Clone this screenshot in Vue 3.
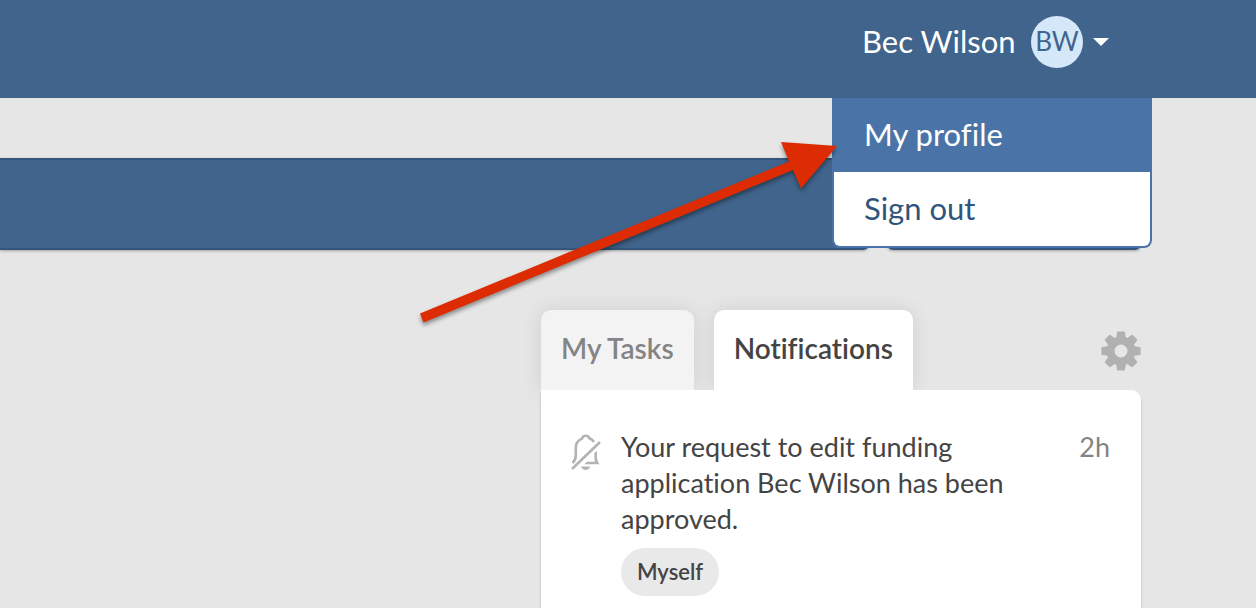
<script setup>
import { ref } from 'vue'

const user = { name: 'Bec Wilson', initials: 'BW' }
const menu = ['My profile', 'Sign out']
const tabs = ['My Tasks', 'Notifications']
const activeTab = ref('Notifications')
const notifications = [
  {
    text: 'Your request to edit funding application Bec Wilson has been approved.',
    age: '2h',
    tag: 'Myself',
  },
]
const teeth = [0, 45, 90, 135, 180, 225, 270, 315]
</script>

<template>
  <div class="page">
    <header class="topbar">
      <div class="account">
        <button class="user" type="button" aria-haspopup="true" aria-expanded="true">
          <span class="name">{{ user.name }}</span>
          <span class="avatar">{{ user.initials }}</span>
          <svg class="caret" width="16" height="8" viewBox="0 0 16 8" aria-hidden="true">
            <path d="M0 0H16L8 8Z" fill="#fff" />
          </svg>
        </button>
        <nav class="menu" aria-label="Account">
          <a v-for="(item, i) in menu" :key="item" href="#" :class="{ current: i === 0 }">{{ item }}</a>
        </nav>
      </div>
    </header>

    <main class="content">
      <div class="bars">
        <div class="bar wide"></div>
        <div class="bar"></div>
      </div>

      <section class="feed">
        <div class="tabs">
          <button
            v-for="tab in tabs"
            :key="tab"
            type="button"
            class="tab"
            :class="{ active: tab === activeTab }"
            @click="activeTab = tab"
          >{{ tab }}</button>
          <button class="settings" type="button" aria-label="Settings">
            <svg width="40" height="40" viewBox="-20 -20 40 40" aria-hidden="true">
              <g fill="#b1b1b1" stroke="#b1b1b1" stroke-width="2" stroke-linejoin="round">
                <path v-for="a in teeth" :key="a" :transform="`rotate(${a})`" d="M-4 -11L-3 -18.6H3L4 -11Z" />
              </g>
              <circle r="10.5" fill="none" stroke="#b1b1b1" stroke-width="8" />
            </svg>
          </button>
        </div>

        <div class="panel">
          <article v-for="n in notifications" :key="n.text" class="note">
            <svg class="bell" width="32" height="40" viewBox="0 0 32 40" aria-hidden="true">
              <g fill="none" stroke="#b3b3b3" stroke-width="2.6">
                <path d="M2.6 30Q5.8 27 5.8 22V15C5.8 10 8.5 7 12 5.6C13 1.7 18.5 1.7 19.6 5.6Q22 6.4 24 8.8" />
                <path d="M2 36L30 9" />
              </g>
              <path d="M24.4 20L27 18V25Q27 28 29.4 31.2H14.5L16.8 28.8H25Q24.4 27 24.4 25Z" fill="#b3b3b3" />
              <path d="M11 33.6H20.2C19 38.2 12.2 38.2 11 33.6Z" fill="#b3b3b3" />
            </svg>
            <div class="body">
              <p>{{ n.text }}</p>
              <span class="tag">{{ n.tag }}</span>
            </div>
            <time class="age">{{ n.age }}</time>
          </article>
        </div>
      </section>
    </main>

    <svg class="arrow" width="440" height="210" viewBox="0 0 440 210" aria-hidden="true">
      <path d="M10 183.500L379 31.500L371 12L427 16L391 58.500L383 40L13.500 192.500Z" fill="#dd2c03" />
    </svg>
  </div>
</template>

<style>
body {
  background: #e6e6e6;
}
</style>

<style scoped>
.page {
  position: relative;
  min-height: 100vh;
  overflow: hidden;
  box-sizing: border-box;
  color: #444;
  font-family: Lato, "Liberation Sans", sans-serif;
  font-variant-ligatures: none;
}
button {
  margin: 0;
  padding: 0;
  border: 0;
  background: none;
  color: inherit;
  font: inherit;
  font-variant-ligatures: none;
  cursor: pointer;
}
.topbar {
  display: flex;
  justify-content: flex-end;
  height: 98px;
  padding-right: 104px;
  background: #41648c;
}
.account {
  position: relative;
  width: 320px;
}
.user {
  display: flex;
  align-items: center;
  height: 84px;
  padding-left: 30px;
  color: #fff;
  font-size: 31px;
}
.name {
  width: 169px;
  padding-bottom: 2px;
  text-align: left;
  white-space: nowrap;
}
.avatar {
  width: 52px;
  height: 52px;
  border-radius: 50%;
  background: #d5e8fa;
  color: #41648c;
  font-size: 26px;
  line-height: 50px;
  text-align: center;
}
.caret {
  margin-left: 10px;
}
.menu {
  position: absolute;
  z-index: 2;
  top: 98px;
  left: 0;
  right: 0;
  overflow: hidden;
  border: 2px solid #4a74a8;
  border-top: 0;
  border-radius: 0 0 8px 8px;
  background: #fff;
}
.menu a {
  display: block;
  padding: 0 30px 2px;
  color: #30557c;
  font-size: 31px;
  line-height: 72px;
  text-decoration: none;
}
.menu a.current {
  background: #4a74a8;
  color: #fff;
}
.content {
  padding: 60px 115px 0 0;
}
.bars {
  display: flex;
  gap: 18px;
}
.bar {
  box-sizing: border-box;
  width: 254px;
  height: 92px;
  border: 2px solid #34567a;
  border-radius: 6px;
  background: #41648c;
  box-shadow: 0 1px 3px rgba(0, 0, 0, 0.3);
}
.bar.wide {
  flex: 1;
  border-left: 0;
  border-radius: 0 6px 6px 0;
}
.feed {
  width: 600px;
  margin: 60px 0 0 auto;
}
.tabs {
  display: flex;
  gap: 20px;
  height: 80px;
}
.tab {
  padding: 0 20px 4px;
  border-radius: 10px 10px 0 0;
  background: #f3f3f3;
  box-shadow: 0 0 20px rgba(0, 0, 0, 0.1);
  color: #848484;
  font-size: 28px;
  font-weight: 600;
  white-space: nowrap;
}
.tab.active {
  background: #fff;
  color: #444;
}
.settings {
  width: 40px;
  height: 40px;
  margin: 21px 0 0 auto;
}
.settings svg,
.bell {
  display: block;
}
.panel {
  position: relative;
  min-height: 218px;
  border-radius: 0 10px 0 0;
  background: #fff;
  box-shadow: 0 3px 3px rgba(0, 0, 0, 0.2);
}
.note {
  display: flex;
  padding: 39px 31px 12px 29px;
  font-size: 27px;
  line-height: 36px;
}
.bell {
  flex: none;
  margin-top: 4px;
}
.body {
  flex: 1;
  margin: 0 64px 0 19px;
}
.body p {
  margin: 0 0 11px;
}
.tag {
  display: inline-block;
  padding: 0 16px;
  border-radius: 24px;
  background: #e9e9e9;
  font-size: 22px;
  font-weight: 600;
  line-height: 48px;
}
.age {
  color: #848484;
}
.arrow {
  position: absolute;
  z-index: 3;
  top: 130px;
  left: 410px;
  filter: drop-shadow(0 3px 2px rgba(0, 0, 0, 0.4));
  pointer-events: none;
}
</style>
